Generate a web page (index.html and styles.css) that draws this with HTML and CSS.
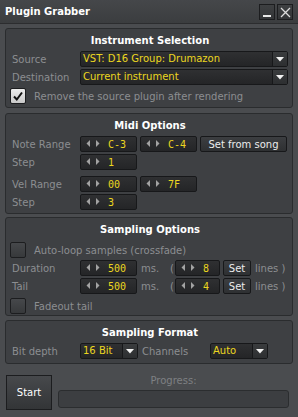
FILE: index.html
```html
<!DOCTYPE html>
<html lang="en">
<head>
    <meta charset="UTF-8">
    <meta name="viewport" content="width=device-width, initial-scale=1.0">
    <title>Plugin Grabber</title>
    <link rel="stylesheet" href="styles.css">
</head>
<body>
    <div class="window">
        <div class="titlebar">
            <span class="title">Plugin Grabber</span>
            <div class="title-buttons">
                <div class="tb-btn">
                    <svg width="14" height="14" viewBox="0 0 14 14"><rect x="3" y="10" width="8" height="2" fill="#e8e8e8"/></svg>
                </div>
                <div class="tb-btn">
                    <svg width="14" height="14" viewBox="0 0 14 14"><path d="M3 3 L12 12 M12 3 L3 12" stroke="#dcdcdc" stroke-width="1.3" fill="none"/></svg>
                </div>
            </div>
        </div>

        <div class="content">
            <div class="group g-instrument">
                <div class="group-title">Instrument Selection</div>
                <div class="row">
                    <span class="label">Source</span>
                    <div class="combo combo-wide">
                        <span class="combo-text">VST: D16 Group: Drumazon</span>
                        <span class="combo-arrow"><svg width="8" height="5" viewBox="0 0 8 5"><polygon points="0,0 8,0 4,4.5" fill="#f2f2f2"/></svg></span>
                    </div>
                </div>
                <div class="row">
                    <span class="label">Destination</span>
                    <div class="combo combo-wide">
                        <span class="combo-text">Current instrument</span>
                        <span class="combo-arrow"><svg width="8" height="5" viewBox="0 0 8 5"><polygon points="0,0 8,0 4,4.5" fill="#f2f2f2"/></svg></span>
                    </div>
                </div>
                <div class="row check-row remove-row">
                    <span class="checkbox checked">
                        <svg width="14" height="14" viewBox="0 0 14 14"><path d="M3 7.5 L5.8 10.5 L11 3.5" stroke="#111" stroke-width="2" fill="none"/></svg>
                    </span>
                    <span>Remove the source plugin after rendering</span>
                </div>
            </div>

            <div class="group g-midi">
                <div class="group-title">Midi Options</div>
                <div class="row">
                    <span class="label">Note Range</span>
                    <div class="spin">
                        <svg class="spin-arrows" width="14" height="8" viewBox="0 0 14 8"><polygon points="4,0 4,7 0.5,3.5" fill="#a3a3a3"/><polygon points="10,0 10,7 13.5,3.5" fill="#a3a3a3"/></svg>
                        <span class="spin-value">C-3</span>
                    </div>
                    <div class="spin spin-next">
                        <svg class="spin-arrows" width="14" height="8" viewBox="0 0 14 8"><polygon points="4,0 4,7 0.5,3.5" fill="#a3a3a3"/><polygon points="10,0 10,7 13.5,3.5" fill="#a3a3a3"/></svg>
                        <span class="spin-value">C-4</span>
                    </div>
                    <div class="btn btn-song">Set from song</div>
                </div>
                <div class="row">
                    <span class="label">Step</span>
                    <div class="spin">
                        <svg class="spin-arrows" width="14" height="8" viewBox="0 0 14 8"><polygon points="4,0 4,7 0.5,3.5" fill="#a3a3a3"/><polygon points="10,0 10,7 13.5,3.5" fill="#a3a3a3"/></svg>
                        <span class="spin-value">1</span>
                    </div>
                </div>
                <div class="row vel-row">
                    <span class="label">Vel Range</span>
                    <div class="spin">
                        <svg class="spin-arrows" width="14" height="8" viewBox="0 0 14 8"><polygon points="4,0 4,7 0.5,3.5" fill="#a3a3a3"/><polygon points="10,0 10,7 13.5,3.5" fill="#a3a3a3"/></svg>
                        <span class="spin-value">00</span>
                    </div>
                    <div class="spin spin-next">
                        <svg class="spin-arrows" width="14" height="8" viewBox="0 0 14 8"><polygon points="4,0 4,7 0.5,3.5" fill="#a3a3a3"/><polygon points="10,0 10,7 13.5,3.5" fill="#a3a3a3"/></svg>
                        <span class="spin-value">7F</span>
                    </div>
                </div>
                <div class="row">
                    <span class="label">Step</span>
                    <div class="spin">
                        <svg class="spin-arrows" width="14" height="8" viewBox="0 0 14 8"><polygon points="4,0 4,7 0.5,3.5" fill="#a3a3a3"/><polygon points="10,0 10,7 13.5,3.5" fill="#a3a3a3"/></svg>
                        <span class="spin-value">3</span>
                    </div>
                </div>
            </div>

            <div class="group g-sampling">
                <div class="group-title">Sampling Options</div>
                <div class="row check-row autoloop-row">
                    <span class="checkbox"></span>
                    <span>Auto-loop samples (crossfade)</span>
                </div>
                <div class="row">
                    <span class="label">Duration</span>
                    <div class="spin">
                        <svg class="spin-arrows" width="14" height="8" viewBox="0 0 14 8"><polygon points="4,0 4,7 0.5,3.5" fill="#a3a3a3"/><polygon points="10,0 10,7 13.5,3.5" fill="#a3a3a3"/></svg>
                        <span class="spin-value">500</span>
                    </div>
                    <span class="unit">ms.</span>
                    <span class="paren">(</span>
                    <div class="spin spin-small">
                        <svg class="spin-arrows" width="14" height="8" viewBox="0 0 14 8"><polygon points="4,0 4,7 0.5,3.5" fill="#a3a3a3"/><polygon points="10,0 10,7 13.5,3.5" fill="#a3a3a3"/></svg>
                        <span class="spin-value">8</span>
                    </div>
                    <div class="btn btn-set">Set</div>
                    <span class="lines">lines )</span>
                </div>
                <div class="row">
                    <span class="label">Tail</span>
                    <div class="spin">
                        <svg class="spin-arrows" width="14" height="8" viewBox="0 0 14 8"><polygon points="4,0 4,7 0.5,3.5" fill="#a3a3a3"/><polygon points="10,0 10,7 13.5,3.5" fill="#a3a3a3"/></svg>
                        <span class="spin-value">500</span>
                    </div>
                    <span class="unit">ms.</span>
                    <span class="paren">(</span>
                    <div class="spin spin-small">
                        <svg class="spin-arrows" width="14" height="8" viewBox="0 0 14 8"><polygon points="4,0 4,7 0.5,3.5" fill="#a3a3a3"/><polygon points="10,0 10,7 13.5,3.5" fill="#a3a3a3"/></svg>
                        <span class="spin-value">4</span>
                    </div>
                    <div class="btn btn-set">Set</div>
                    <span class="lines">lines )</span>
                </div>
                <div class="row check-row fadeout-row">
                    <span class="checkbox"></span>
                    <span>Fadeout tail</span>
                </div>
            </div>

            <div class="group g-format">
                <div class="group-title">Sampling Format</div>
                <div class="row">
                    <span class="label">Bit depth</span>
                    <div class="combo combo-small">
                        <span class="combo-text">16 Bit</span>
                        <span class="combo-arrow"><svg width="8" height="5" viewBox="0 0 8 5"><polygon points="0,0 8,0 4,4.5" fill="#f2f2f2"/></svg></span>
                    </div>
                    <span class="channels-label">Channels</span>
                    <div class="combo combo-small">
                        <span class="combo-text">Auto</span>
                        <span class="combo-arrow"><svg width="8" height="5" viewBox="0 0 8 5"><polygon points="0,0 8,0 4,4.5" fill="#f2f2f2"/></svg></span>
                    </div>
                </div>
            </div>
        </div>

        <div class="footer">
            <div class="start-btn">Start</div>
            <div class="progress-col">
                <div class="progress-label">Progress:</div>
                <div class="progress-bar"></div>
            </div>
        </div>
    </div>
</body>
</html>
```

FILE: styles.css
```css
* {
    box-sizing: border-box;
}
body {
    margin: 0;
    width: 298px;
    height: 417px;
    overflow: hidden;
    background-color: #4a4c4f;
    font-family: 'DejaVu Sans', Verdana, sans-serif;
    font-size: 10px;
    color: #8c8e91;
}
.window {
    width: 298px;
    height: 417px;
    display: flex;
    flex-direction: column;
    background-color: #4a4c4f;
}

/* Title bar */
.titlebar {
    flex: none;
    height: 24px;
    display: flex;
    align-items: center;
    justify-content: space-between;
    padding: 0 5px;
    background: linear-gradient(#45474a, #3b3d3f);
    border-bottom: 1px solid #2c2d2f;
}
.title {
    color: #ffffff;
    font-weight: bold;
}
.title-buttons {
    display: flex;
    gap: 2px;
    align-self: flex-start;
    margin-top: 4px;
}
.tb-btn {
    width: 16px;
    height: 16px;
    border: 1px solid #1c1d1f;
    background: linear-gradient(#3e4042, #333537);
}
.tb-btn svg {
    display: block;
}

/* Group boxes */
.content {
    display: flex;
    flex-direction: column;
    padding: 4px 5px 0;
}
.group {
    display: flex;
    flex-direction: column;
    gap: 2px;
    padding: 0 4px 0 6px;
    background-color: #3e4043;
    border: 1px solid #2a2c2e;
    border-radius: 3px;
}
.g-instrument { height: 80px; }
.g-midi { height: 101px; margin-top: 5px; }
.g-sampling { height: 99px; margin-top: 3px; }
.g-format { height: 44px; margin-top: 4px; }

.group-title {
    padding: 6px 0 2px;
    line-height: 12px;
    text-align: center;
    color: #ffffff;
    font-weight: bold;
}
.row {
    flex: none;
    display: flex;
    align-items: center;
    height: 16px;
    white-space: nowrap;
}
.label {
    flex: none;
    width: 68px;
}
.remove-row { margin-top: 1px; }
.vel-row { margin-top: 4px; }
.autoloop-row { margin-top: 2px; }
.fadeout-row { margin-top: 2px; }

/* Check boxes */
.check-row {
    margin-left: -2px;
    gap: 8px;
}
.checkbox {
    flex: none;
    width: 16px;
    height: 16px;
    border: 1px solid #1c1d1f;
    border-radius: 2px;
    background: linear-gradient(#46484b, #37393b);
}
.checkbox.checked {
    background: linear-gradient(#ececec, #c8c8c8);
}
.checkbox svg {
    display: block;
}

/* Combo boxes */
.combo {
    flex: none;
    display: flex;
    height: 16px;
    border: 1px solid #17181a;
    border-radius: 2px;
    background: linear-gradient(#2f3032, #242527);
}
.combo-wide { width: 208px; }
.combo-small { width: 58px; }
.combo-text {
    flex: 1;
    padding-left: 2px;
    line-height: 14px;
    color: #ecd71f;
    overflow: hidden;
}
.combo-arrow {
    flex: none;
    width: 15px;
    display: flex;
    align-items: center;
    justify-content: center;
    border-left: 1px solid #17181a;
    background: linear-gradient(#3a3c3e, #2d2f31);
}
.channels-label {
    width: 68px;
    margin-left: 4px;
}

/* Spin boxes */
.spin {
    flex: none;
    display: flex;
    align-items: center;
    width: 57px;
    height: 16px;
    border: 1px solid #17181a;
    border-radius: 2px;
    background: linear-gradient(#2f3032, #242527);
}
.spin-next { margin-left: 3px; }
.spin-small { width: 45px; }
.spin-arrows {
    flex: none;
    margin-left: 5px;
}
.spin-value {
    margin-left: 8px;
    font-family: 'DejaVu Sans Mono', monospace;
    color: #ecd71f;
}
.unit {
    width: 29px;
    margin-left: 4px;
}
.paren {
    width: 5px;
}
.lines {
    margin-left: 4px;
}

/* Buttons */
.btn {
    flex: none;
    display: flex;
    align-items: center;
    justify-content: center;
    height: 16px;
    border: 1px solid #17181a;
    border-radius: 2px;
    background: linear-gradient(#3c3e41, #2e3032);
    color: #ececec;
}
.btn-song {
    width: 87px;
    margin-left: 3px;
}
.btn-set {
    width: 28px;
    margin-left: 3px;
}

/* Footer */
.footer {
    display: flex;
    margin-top: 11px;
    padding: 0 9px 0 6px;
}
.start-btn {
    flex: none;
    width: 46px;
    height: 35px;
    display: flex;
    align-items: center;
    justify-content: center;
    border: 1px solid #1c1d1f;
    background: linear-gradient(#47494c, #333537);
    color: #ffffff;
}
.progress-col {
    flex: 1;
    display: flex;
    flex-direction: column;
    margin-left: 6px;
}
.progress-label {
    line-height: 12px;
    text-align: center;
    color: #7e8083;
}
.progress-bar {
    margin-top: 3px;
    height: 18px;
    border: 1px solid #2b2d2f;
    border-radius: 3px;
    background-color: #3c3e41;
}
```
